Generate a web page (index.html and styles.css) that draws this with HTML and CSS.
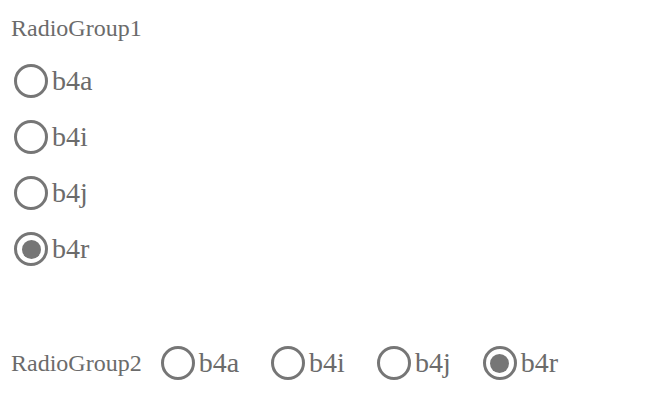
FILE: index.html
```html
<!DOCTYPE html>
<html>
<head>
<meta charset="utf-8">
<link rel="stylesheet" href="styles.css">
</head>
<body>
<div class="page">
  <div class="group-vertical">
    <div class="group-label">RadioGroup1</div>
    <div class="options-col">
      <label class="option"><span class="radio"></span><span class="opt-text">b4a</span></label>
      <label class="option"><span class="radio"></span><span class="opt-text">b4i</span></label>
      <label class="option"><span class="radio"></span><span class="opt-text">b4j</span></label>
      <label class="option"><span class="radio checked"></span><span class="opt-text">b4r</span></label>
    </div>
  </div>
  <div class="group-horizontal">
    <div class="group-label">RadioGroup2</div>
    <div class="options-row">
      <label class="option"><span class="radio"></span><span class="opt-text">b4a</span></label>
      <label class="option"><span class="radio"></span><span class="opt-text">b4i</span></label>
      <label class="option"><span class="radio"></span><span class="opt-text">b4j</span></label>
      <label class="option"><span class="radio checked"></span><span class="opt-text">b4r</span></label>
    </div>
  </div>
</div>
</body>
</html>
```
FILE: styles.css
```css
html, body {
  margin: 0;
  padding: 0;
  background: #ffffff;
}
body {
  font-family: "Liberation Serif", "Times New Roman", serif;
  color: #6b6b6b;
}
.page {
  padding: 14px 0 0 11px;
}
.group-label {
  font-size: 24px;
  line-height: 28px;
}
.options-col {
  display: flex;
  flex-direction: column;
  gap: 22px;
  margin-top: 22px;
  padding-left: 3px;
}
.option {
  display: flex;
  align-items: center;
  gap: 4px;
  font-size: 28px;
  line-height: 34px;
}
.radio {
  box-sizing: border-box;
  width: 34px;
  height: 34px;
  border: 3px solid #767676;
  border-radius: 50%;
  background: #fff;
  display: flex;
  align-items: center;
  justify-content: center;
  flex: none;
}
.radio.checked::after {
  content: "";
  width: 19px;
  height: 19px;
  border-radius: 50%;
  background: #767676;
}
.group-horizontal {
  display: flex;
  align-items: center;
  gap: 19px;
  margin-top: 80px;
}
.options-row {
  display: flex;
  align-items: center;
  gap: 32px;
}
```
